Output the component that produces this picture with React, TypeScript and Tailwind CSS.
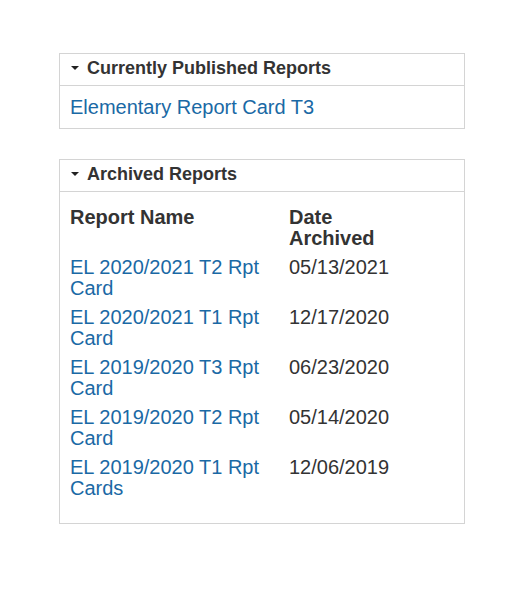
const archived = [
    { name: "EL 2020/2021 T2 Rpt Card", date: "05/13/2021" },
    { name: "EL 2020/2021 T1 Rpt Card", date: "12/17/2020" },
    { name: "EL 2019/2020 T3 Rpt Card", date: "06/23/2020" },
    { name: "EL 2019/2020 T2 Rpt Card", date: "05/14/2020" },
    { name: "EL 2019/2020 T1 Rpt Cards", date: "12/06/2019" },
];

const PanelHeader = ({ title }: { title: string }) => (
    <div className="flex items-center h-[32px] pl-[11px] pb-[3px] border-b border-[#d4d4d4]">
        <span className="inline-block w-0 h-0 border-l-[4px] border-r-[4px] border-t-[4px] border-l-transparent border-r-transparent border-t-[#222] mr-[8px]" />
        <h2 className="text-[18px] font-bold leading-[20px] text-[#333]">{title}</h2>
    </div>
);

const App = () => {
    return (
        <div className="min-h-[608px] bg-white pt-[53px] pl-[59px] font-['Liberation_Sans',Arial,sans-serif] text-[#333]">
            <div className="flex flex-col gap-[30px] w-[406px]">
                <section className="border border-[#d4d4d4]">
                    <PanelHeader title="Currently Published Reports" />
                    <div className="px-[10px] pt-[11px] pb-[10px] text-[20px] leading-[21px]">
                        <a href="#" className="block text-[#1a69a5]">Elementary Report Card T3</a>
                    </div>
                </section>

                <section className="border border-[#d4d4d4]">
                    <PanelHeader title="Archived Reports" />
                    <div className="pt-[15px] pb-[24px] px-[10px]">
                        <div className="grid grid-cols-[219px_1fr] gap-y-[8px] text-[20px] leading-[21px]">
                            <div className="font-bold">Report Name</div>
                            <div className="font-bold w-[100px]">Date Archived</div>
                            {archived.map((r) => (
                                <div key={r.name} className="contents">
                                    <a href="#" className="text-[#1a69a5] pr-[20px]">{r.name}</a>
                                    <div>{r.date}</div>
                                </div>
                            ))}
                        </div>
                    </div>
                </section>
            </div>
        </div>
    );
}

export default App;
